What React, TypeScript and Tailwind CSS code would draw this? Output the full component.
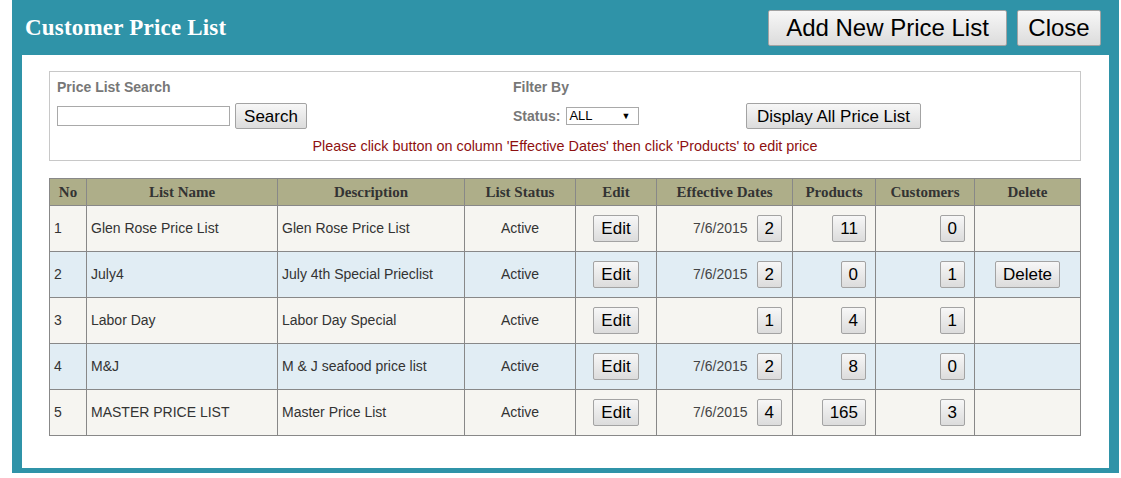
import type { ReactNode } from 'react';

type Row = {
    no: number;
    name: string;
    description: string;
    status: string;
    date: string;
    dateCount: number;
    products: number;
    customers: number;
    canDelete: boolean;
};

const rows: Row[] = [
    { no: 1, name: 'Glen Rose Price List', description: 'Glen Rose Price List', status: 'Active', date: '7/6/2015', dateCount: 2, products: 11, customers: 0, canDelete: false },
    { no: 2, name: 'July4', description: 'July 4th Special Prieclist', status: 'Active', date: '7/6/2015', dateCount: 2, products: 0, customers: 1, canDelete: true },
    { no: 3, name: 'Labor Day', description: 'Labor Day Special', status: 'Active', date: '', dateCount: 1, products: 4, customers: 1, canDelete: false },
    { no: 4, name: 'M&J', description: 'M & J seafood price list', status: 'Active', date: '7/6/2015', dateCount: 2, products: 8, customers: 0, canDelete: false },
    { no: 5, name: 'MASTER PRICE LIST', description: 'Master Price List', status: 'Active', date: '7/6/2015', dateCount: 4, products: 165, customers: 3, canDelete: false },
];

const sans = "font-['Liberation_Sans',Arial,sans-serif]";
const serif = "font-['Liberation_Serif','Times_New_Roman',serif]";

function Btn({ children, className = '' }: { children: ReactNode; className?: string }) {
    return (
        <button
            type="button"
            className={`${sans} inline-flex items-center justify-center border border-[#a3a3a3] rounded-[2px] bg-gradient-to-b from-[#f7f7f7] to-[#dcdcdc] text-black leading-none ${className}`}
        >
            {children}
        </button>
    );
}

function CellBtn({ children }: { children: ReactNode }) {
    return <Btn className="h-[27px] px-[7px] text-[17px]">{children}</Btn>;
}

export default function App() {
    const th = `${serif} border border-[#888] font-bold text-[15px] text-[#333] h-[27px] text-center`;
    const td = `border border-[#888] h-[46px] text-[14px] text-[#333]`;
    const label = 'text-[14px] font-bold text-[#777]';

    return (
        <div className={`${sans} bg-white w-[1121px] h-[478px] pl-[12px]`}>
            <div className="w-[1107px] bg-[#2f93a8] px-[10px] pb-[5px]">
                {/* title bar */}
                <div className="h-[55px] flex items-center justify-between pl-[3px] pr-[8px]">
                    <h1 className={`${serif} text-white font-bold text-[23px] leading-none tracking-[0.2px]`}>Customer Price List</h1>
                    <div className="flex gap-[10px] pt-[1px]">
                        <Btn className="h-[36px] w-[239px] text-[24px]">Add New Price List</Btn>
                        <Btn className="h-[36px] w-[84px] text-[24px]">Close</Btn>
                    </div>
                </div>

                <div className="bg-white h-[413px] pt-[16px] px-[27px]">
                    {/* search panel */}
                    <div className="border border-[#c8c8c8] w-[1032px] h-[90px] pt-[7px] px-[7px]">
                        <div className="grid grid-cols-[456px_233px_1fr] gap-y-[8px]">
                            <div className={`h-[16px] leading-[16px] ${label}`}>Price List Search</div>
                            <div className={`h-[16px] leading-[16px] ${label}`}>Filter By</div>
                            <div />
                            <div className="flex items-center h-[26px]">
                                <input type="text" className="w-[173px] h-[20px] border border-[#a9a9a9] bg-white" />
                                <Btn className="ml-[5px] h-[26px] w-[72px] text-[17px]">Search</Btn>
                            </div>
                            <div className="flex items-center h-[26px]">
                                <span className={`${label} mr-[6px]`}>Status:</span>
                                <div className="relative w-[73px] h-[18px] border border-[#a9a9a9] bg-white text-[13px] text-black leading-[16px] pl-[2px]">
                                    ALL
                                    <span className="absolute right-[8px] top-0 text-[9px] leading-[16px]">▼</span>
                                </div>
                            </div>
                            <div className="flex items-center h-[26px]">
                                <Btn className="h-[26px] w-[175px] text-[17px]">Display All Price List</Btn>
                            </div>
                        </div>
                        <p className="mt-[9px] text-center text-[14.4px] leading-[16px] text-[#8e1010]">
                            Please click button on column 'Effective Dates' then click 'Products' to edit price
                        </p>
                    </div>

                    {/* price list table */}
                    <table className="mt-[17px] w-[1031px] border-collapse table-fixed">
                        <colgroup>
                            <col className="w-[37px]" />
                            <col className="w-[191px]" />
                            <col className="w-[187px]" />
                            <col className="w-[111px]" />
                            <col className="w-[81px]" />
                            <col className="w-[136px]" />
                            <col className="w-[83px]" />
                            <col className="w-[99px]" />
                            <col className="w-[106px]" />
                        </colgroup>
                        <thead>
                            <tr className="bg-[#aeae89]">
                                <th className={th}>No</th>
                                <th className={th}>List Name</th>
                                <th className={th}>Description</th>
                                <th className={th}>List Status</th>
                                <th className={th}>Edit</th>
                                <th className={th}>Effective Dates</th>
                                <th className={th}>Products</th>
                                <th className={th}>Customers</th>
                                <th className={th}>Delete</th>
                            </tr>
                        </thead>
                        <tbody>
                            {rows.map((r, i) => (
                                <tr key={r.no} className={i % 2 === 0 ? 'bg-[#f6f5f1]' : 'bg-[#e1edf4]'}>
                                    <td className={`${td} pl-[4px] text-[#5a4a26]`}>{r.no}</td>
                                    <td className={`${td} pl-[4px]`}>{r.name}</td>
                                    <td className={`${td} pl-[4px]`}>{r.description}</td>
                                    <td className={`${td} text-center`}>{r.status}</td>
                                    <td className={`${td} text-center`}>
                                        <CellBtn>Edit</CellBtn>
                                    </td>
                                    <td className={`${td} text-right pr-[10px]`}>
                                        <div className="flex items-center justify-end gap-[9px]">
                                            {r.date && <span className="text-[#444]">{r.date}</span>}
                                            <CellBtn>{r.dateCount}</CellBtn>
                                        </div>
                                    </td>
                                    <td className={`${td} text-right pr-[9px]`}>
                                        <CellBtn>{r.products}</CellBtn>
                                    </td>
                                    <td className={`${td} text-right pr-[9px]`}>
                                        <CellBtn>{r.customers}</CellBtn>
                                    </td>
                                    <td className={`${td} text-center`}>
                                        {r.canDelete && <CellBtn>Delete</CellBtn>}
                                    </td>
                                </tr>
                            ))}
                        </tbody>
                    </table>
                </div>
            </div>
        </div>
    );
}
